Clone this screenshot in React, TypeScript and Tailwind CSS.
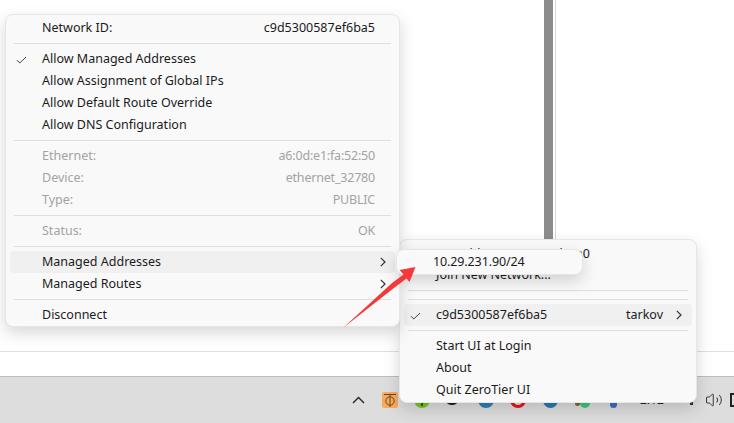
import { Volume2 } from "lucide-react";
import type { ReactNode } from "react";

function Sep() {
  return (
    <div className="h-[9px] flex items-start pt-[4px] px-[4px]">
      <div className="h-px w-full bg-[#dedede]" />
    </div>
  );
}

function Check() {
  return (
    <svg width="11" height="8" viewBox="0 0 11 8" className="absolute left-[6px] top-[8px]" fill="none">
      <path d="M1 4.2 L3.8 7 L10 1" stroke="#444" strokeWidth="1" />
    </svg>
  );
}

function Chevron({ pos }: { pos: string }) {
  return (
    <svg width="6" height="10" viewBox="0 0 6 10" className={`absolute top-[6px] ${pos}`} fill="none">
      <path d="M0.8 0.8 L5 5 L0.8 9.2" stroke="#333" strokeWidth="1.2" />
    </svg>
  );
}

function Row({
  label,
  value,
  dim,
  hot,
  checked,
  arrow,
  pr = "pr-[20px]",
  extra = "",
  chev = "right-[9px]",
}: {
  label: string;
  value?: string;
  dim?: boolean;
  hot?: boolean;
  checked?: boolean;
  arrow?: boolean;
  pr?: string;
  extra?: string;
  chev?: string;
}) {
  return (
    <div
      className={`relative h-[22px] rounded-[4px] pl-[32px] ${pr} ${extra} flex items-center justify-between ${
        hot ? "bg-[#f0f0f0]" : ""
      } ${dim ? "text-[#a3a3a3]" : "text-[#1b1b1b]"}`}
    >
      {checked && <Check />}
      <span>{label}</span>
      {value && <span className={dim ? "tracking-[-0.2px]" : ""}>{value}</span>}
      {arrow && <Chevron pos={chev} />}
    </div>
  );
}

function Menu({ className, children }: { className: string; children: ReactNode }) {
  return (
    <div
      className={`absolute bg-[#f9f9f9] border border-[#e6e6e6] rounded-[8px] shadow-[0_6px_16px_rgba(0,0,0,0.16)] ${className}`}
    >
      {children}
    </div>
  );
}

export default function App() {
  return (
    <div className="relative w-[734px] h-[423px] overflow-hidden bg-white text-[12.5px] font-['Noto_Sans','Liberation_Sans',sans-serif]">
      {/* window behind the menus */}
      <div className="h-[352px] flex border-b border-[#dfdfdf]">
        <div className="ml-[544px] w-[9px] bg-[#8c8c8c]" />
        <div className="ml-[2px] w-px bg-[#d9d9d9]" />
      </div>
      <div className="h-[24px]" />

      {/* taskbar, tray icons mostly covered by the menu */}
      <div className="h-[47px] bg-[#dcdddc] border-t border-[#bdbdbd] flex items-center pl-[352px]">
        <svg width="13" height="8" viewBox="0 0 13 8" fill="none" className="shrink-0">
          <path d="M1 7 L6.5 1.5 L12 7" stroke="#222" strokeWidth="1.4" />
        </svg>
        <svg width="16" height="16" viewBox="0 0 16 16" fill="none" className="ml-[17px] shrink-0">
          <rect width="16" height="16" rx="2" fill="#f8aa5c" />
          <path d="M2 2.5 H14" stroke="#6b4a20" strokeWidth="1" />
          <circle cx="8" cy="9" r="4.2" stroke="#6b4a20" strokeWidth="1" />
          <path d="M8 2.5 V15" stroke="#6b4a20" strokeWidth="1" />
        </svg>
        <div className="ml-[16px] w-[16px] h-[16px] rounded-full bg-[#7cc423] flex items-center justify-center shrink-0">
          <div className="w-[2px] h-[12px] bg-[#2d5a0c]" />
        </div>
        <div className="ml-[16px] w-[12px] h-[10px] rounded-full bg-[#222] shrink-0" />
        <div className="ml-[20px] w-[16px] h-[16px] rounded-full bg-[#2f7fb5] shrink-0" />
        <div className="ml-[16px] w-[16px] h-[16px] rounded-full bg-[#e8141c] flex items-center justify-center shrink-0">
          <div className="w-[8px] h-[9px] rounded-full bg-[#f6d6d6]" />
        </div>
        <div className="ml-[17px] w-[15px] h-[16px] rounded-full bg-[#2a78ac] shrink-0" />
        <div className="ml-[17px] w-[15px] flex items-center shrink-0">
          <div className="w-[5px] h-[11px] rounded-full bg-[#7a6a2c]" />
          <div className="w-[10px] h-[16px] rounded-full bg-[#38c878]" />
        </div>
        <div className="ml-[20px] w-[7px] h-[16px] rounded-full bg-[#3a70c0] shrink-0" />
        <span className="ml-[23px] text-[12px] text-[#222] shrink-0">2:12</span>
        <div className="ml-[26px] w-[3px] h-[10px] bg-[#333] shrink-0" />
        <Volume2 size={18} strokeWidth={1.2} className="ml-[12px] text-[#222] shrink-0" />
        <div className="ml-[7px] w-[10px] h-[14px] border-2 border-[#222] shrink-0" />
      </div>

      {/* tray menu */}
      <Menu className="left-[399px] top-[239px] w-[298px] h-[164px] px-[4px] pt-[2px]">
        <Row label="My Address:" value="acaecedcea0" pr="pr-[102px]" extra="pt-[2px]" />
        <Row label="Join New Network..." />
        <Sep />
        <Sep />
        <Row
          label="c9d5300587ef6ba5"
          value="tarkov"
          checked
          arrow
          hot
          pr="pr-[29px]"
          chev="right-[10px]"
        />
        <Sep />
        <Row label="Start UI at Login" />
        <Row label="About" />
        <Row label="Quit ZeroTier UI" />
      </Menu>

      {/* network submenu */}
      <Menu className="left-[5px] top-[14px] w-[395px] h-[313px] px-[4px] pt-[2px]">
        <Row label="Network ID:" value="c9d5300587ef6ba5" />
        <Sep />
        <Row label="Allow Managed Addresses" checked />
        <Row label="Allow Assignment of Global IPs" />
        <Row label="Allow Default Route Override" />
        <Row label="Allow DNS Configuration" />
        <Sep />
        <Row label="Ethernet:" value="a6:0d:e1:fa:52:50" dim />
        <Row label="Device:" value="ethernet_32780" dim />
        <Row label="Type:" value="PUBLIC" dim />
        <Sep />
        <Row label="Status:" value="OK" dim />
        <Sep />
        <Row label="Managed Addresses" hot arrow />
        <Row label="Managed Routes" arrow />
        <Sep />
        <Row label="Disconnect" />
      </Menu>

      {/* addresses popup */}
      <Menu className="left-[396px] top-[249px] w-[187px] h-[26px] flex items-center pl-[36px] text-[#1b1b1b] tracking-[-0.12px]">
        10.29.231.90/24
      </Menu>

      {/* annotation arrow */}
      <svg width="734" height="423" viewBox="0 0 734 423" className="absolute inset-0 pointer-events-none">
        <polygon
          points="343,328 392,283 403.5,274.5 399.5,270 415.5,267 409.5,282 406.5,278.5 392,289.5"
          fill="#f5393a"
        />
      </svg>
    </div>
  );
}
